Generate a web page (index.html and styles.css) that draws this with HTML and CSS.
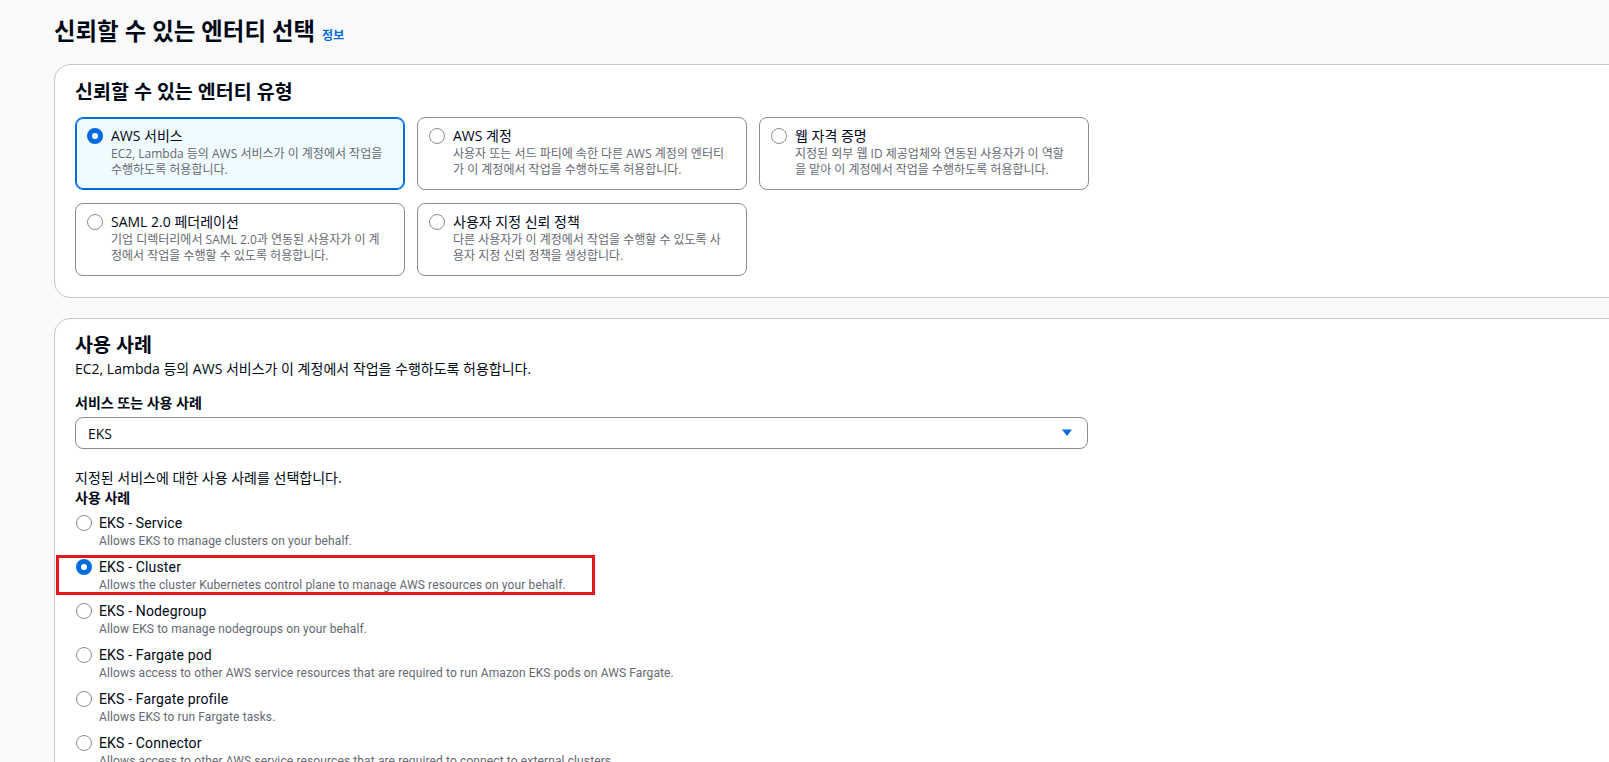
FILE: index.html
```html
<!DOCTYPE html>
<html lang="ko">
<head>
<meta charset="utf-8">
<title>신뢰할 수 있는 엔터티 선택</title>
<link rel="stylesheet" href="styles.css">
</head>
<body>
<div class="page">
  <h1 class="page-title">신뢰할 수 있는 엔터티 선택 <a class="info" href="#">정보</a></h1>

  <section class="panel">
    <h2 class="panel-title">신뢰할 수 있는 엔터티 유형</h2>
    <div class="tiles">
      <div class="tile selected">
        <span class="radio on"></span>
        <div class="tile-body">
          <div class="tile-title">AWS 서비스</div>
          <div class="tile-desc">EC2, Lambda 등의 AWS 서비스가 이 계정에서 작업을 수행하도록 허용합니다.</div>
        </div>
      </div>
      <div class="tile">
        <span class="radio"></span>
        <div class="tile-body">
          <div class="tile-title">AWS 계정</div>
          <div class="tile-desc">사용자 또는 서드 파티에 속한 다른 AWS 계정의 엔터티가 이 계정에서 작업을 수행하도록 허용합니다.</div>
        </div>
      </div>
      <div class="tile">
        <span class="radio"></span>
        <div class="tile-body">
          <div class="tile-title">웹 자격 증명</div>
          <div class="tile-desc">지정된 외부 웹 ID 제공업체와 연동된 사용자가 이 역할을 맡아 이 계정에서 작업을 수행하도록 허용합니다.</div>
        </div>
      </div>
      <div class="tile">
        <span class="radio"></span>
        <div class="tile-body">
          <div class="tile-title">SAML 2.0 페더레이션</div>
          <div class="tile-desc">기업 디렉터리에서 SAML 2.0과 연동된 사용자가 이 계정에서 작업을 수행할 수 있도록 허용합니다.</div>
        </div>
      </div>
      <div class="tile">
        <span class="radio"></span>
        <div class="tile-body">
          <div class="tile-title">사용자 지정 신뢰 정책</div>
          <div class="tile-desc">다른 사용자가 이 계정에서 작업을 수행할 수 있도록 사용자 지정 신뢰 정책을 생성합니다.</div>
        </div>
      </div>
    </div>
  </section>

  <section class="panel">
    <h2 class="panel-title">사용 사례</h2>
    <p class="panel-desc">EC2, Lambda 등의 AWS 서비스가 이 계정에서 작업을 수행하도록 허용합니다.</p>
    <div class="field-label first">서비스 또는 사용 사례</div>
    <div class="select">
      <span class="select-value">EKS</span>
      <svg class="caret" width="16" height="16" viewBox="0 0 16 16"><path d="M3 4.5h10l-5 6.5z" fill="#006ce0"/></svg>
    </div>
    <p class="hint">지정된 서비스에 대한 사용 사례를 선택합니다.</p>
    <div class="field-label">사용 사례</div>
    <div class="options">
      <div class="option">
        <span class="radio"></span>
        <div class="opt-body">
          <div class="opt-title">EKS - Service</div>
          <div class="opt-desc">Allows EKS to manage clusters on your behalf.</div>
        </div>
      </div>
      <div class="option highlighted">
        <span class="radio on"></span>
        <div class="opt-body">
          <div class="opt-title">EKS - Cluster</div>
          <div class="opt-desc">Allows the cluster Kubernetes control plane to manage AWS resources on your behalf.</div>
        </div>
      </div>
      <div class="option">
        <span class="radio"></span>
        <div class="opt-body">
          <div class="opt-title">EKS - Nodegroup</div>
          <div class="opt-desc">Allow EKS to manage nodegroups on your behalf.</div>
        </div>
      </div>
      <div class="option">
        <span class="radio"></span>
        <div class="opt-body">
          <div class="opt-title">EKS - Fargate pod</div>
          <div class="opt-desc">Allows access to other AWS service resources that are required to run Amazon EKS pods on AWS Fargate.</div>
        </div>
      </div>
      <div class="option">
        <span class="radio"></span>
        <div class="opt-body">
          <div class="opt-title">EKS - Fargate profile</div>
          <div class="opt-desc">Allows EKS to run Fargate tasks.</div>
        </div>
      </div>
      <div class="option">
        <span class="radio"></span>
        <div class="opt-body">
          <div class="opt-title">EKS - Connector</div>
          <div class="opt-desc">Allows access to other AWS service resources that are required to connect to external clusters.</div>
        </div>
      </div>
    </div>
  </section>
</div>
</body>
</html>
```
FILE: styles.css
```css
html, body {
  margin: 0;
  padding: 0;
  background: #fafafa;
  overflow: hidden;
}

body {
  font-family: "Open Sans", "Noto Sans CJK KR", sans-serif;
  color: #000716;
}

.page {
  padding: 16px 0 0 54px;
  width: 1600px;
}

.page-title {
  margin: 0 0 13px;
  font-size: 23.4px;
  line-height: 30px;
  font-weight: 700;
  color: #000716;
}

.info {
  font-size: 12px;
  font-weight: 700;
  color: #006ce0;
  text-decoration: none;
  margin-left: 1px;
}

.panel {
  background: #ffffff;
  border: 1px solid #c6c6cd;
  border-radius: 16px;
  padding: 13px 20px 21px;
  margin-bottom: 20px;
}

.panel + .panel {
  padding-top: 12px;
  min-height: 500px;
}

.panel-title {
  margin: 0;
  font-size: 19.5px;
  line-height: 28px;
  font-weight: 700;
}

.tiles {
  margin-top: 11px;
  display: grid;
  grid-template-columns: repeat(3, 330px);
  gap: 13px 12px;
}

.tile {
  display: flex;
  gap: 8px;
  box-sizing: border-box;
  height: 73px;
  border: 1px solid #8c8c94;
  border-radius: 8px;
  padding: 8px 16px 11px 11px;
  background: #ffffff;
}

.tile.selected {
  border-color: #006ce0;
  box-shadow: inset 0 0 0 1px #006ce0;
  background: #f0fbff;
}

.radio {
  flex: none;
  width: 16px;
  height: 16px;
  box-sizing: border-box;
  border-radius: 50%;
  border: 1px solid #8c8c94;
  background: #ffffff;
  margin-top: 2px;
}

.radio.on {
  border: 5px solid #006ce0;
}

.tile-title {
  font-size: 14px;
  line-height: 20px;
}

.tile-desc {
  font-size: 12px;
  line-height: 16px;
  color: #656871;
}

.panel-desc {
  margin: 0;
  font-size: 14px;
  line-height: 20px;
}

.field-label {
  font-size: 14px;
  line-height: 20px;
  font-weight: 700;
}

.field-label.first {
  margin-top: 14px;
}

.select {
  margin-top: 4px;
  width: 1013px;
  height: 32px;
  box-sizing: border-box;
  border: 1px solid #8c8c94;
  border-radius: 8px;
  background: #ffffff;
  padding: 0 12px 0 12px;
  display: flex;
  align-items: center;
  justify-content: space-between;
  font-size: 14px;
}

.hint {
  margin: 19px 0 0;
  font-size: 14px;
  line-height: 20px;
}

.options {
  margin-top: 5px;
  display: flex;
  flex-direction: column;
  gap: 8px;
  font-family: Roboto, "Noto Sans CJK KR", sans-serif;
}

.option {
  position: relative;
  display: flex;
  gap: 7px;
  padding-left: 1px;
}

.option.highlighted::after {
  content: "";
  position: absolute;
  left: -19px;
  top: -2px;
  bottom: -2px;
  width: 539px;
  box-sizing: border-box;
  border: 3px solid #e3181d;
  pointer-events: none;
}

.opt-title {
  font-size: 14px;
  line-height: 20px;
  letter-spacing: 0.15px;
}

.opt-desc {
  font-size: 12px;
  line-height: 16px;
  color: #656871;
  letter-spacing: 0.12px;
}
```
